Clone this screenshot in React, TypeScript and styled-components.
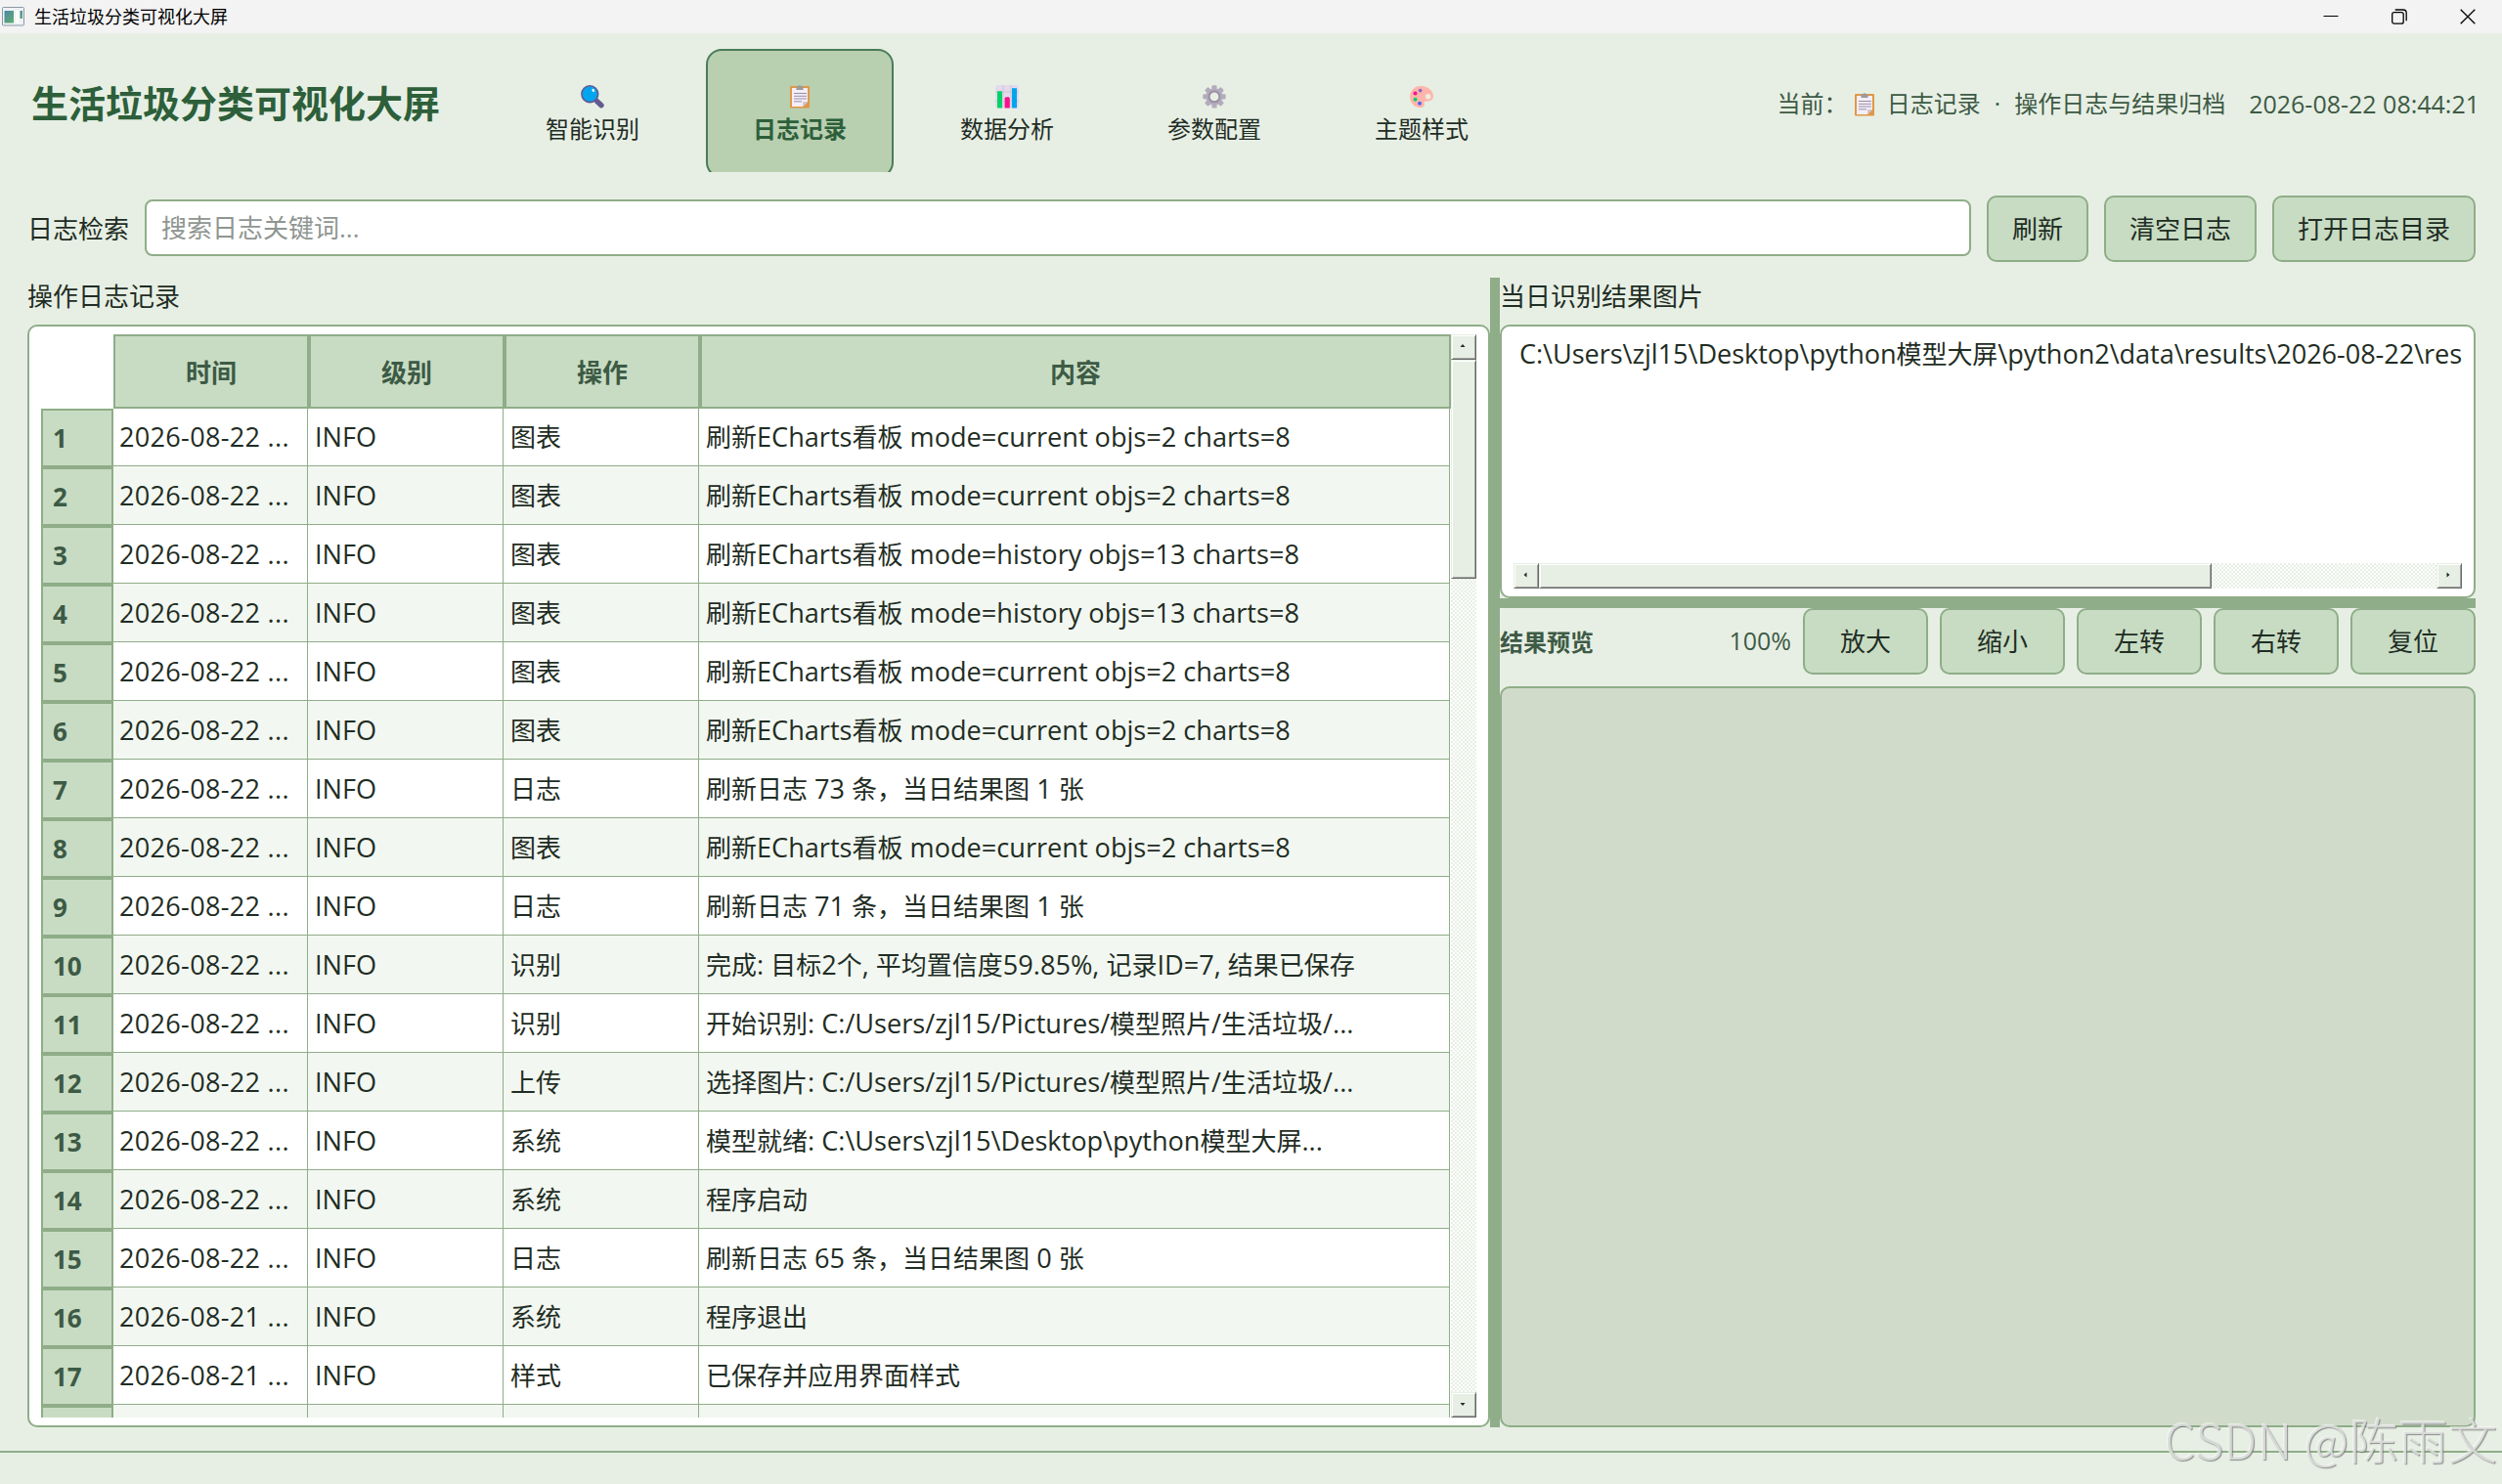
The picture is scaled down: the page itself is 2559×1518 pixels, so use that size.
import React from "react";
import styled, { createGlobalStyle, css } from "styled-components";

const c = {
  page: "#e7efe4",
  line: "#8fad88",
  button: "#c8dcc3",
  active: "#b8cfb0",
  activeLine: "#4a7c59",
  brand: "#2d5f3a",
  muted: "#3d5a45",
  text: "#1f2d24",
  alt: "#f2f7f1",
  preview: "#d0dbca",
};

const GlobalStyle = createGlobalStyle`
  * { box-sizing: border-box; }
  body {
    margin: 0;
    background: ${c.page};
    color: ${c.text};
    font-family: "Open Sans", "Noto Sans CJK SC", sans-serif;
    font-size: 26px;
    line-height: 1;
  }
`;

const Window = styled.div`
  position: relative;
  display: flex;
  flex-direction: column;
  width: 2559px;
  height: 1518px;
  overflow: hidden;
  background: ${c.page};
`;

const TitleBar = styled.header`
  display: flex;
  align-items: center;
  flex: none;
  height: 34px;
  padding: 0 27px 0 2px;
  background: #f3f3f3;
  color: #000;
  font-size: 18px;
`;

const WindowTitle = styled.span`
  flex: 1;
  margin-left: 9px;
  padding-bottom: 1px;
`;

const WindowControls = styled.div`
  display: flex;
  align-items: center;
  gap: 54px;
  padding-bottom: 1px;
`;

const Header = styled.div`
  display: flex;
  flex: none;
  height: 142px;
  padding: 16px 23px 0 32px;
  overflow: hidden;
`;

const Brand = styled.h1`
  display: flex;
  align-items: center;
  width: 478px;
  height: 110px;
  margin: 0;
  font-size: 38px;
  font-weight: 700;
  color: ${c.brand};
  white-space: nowrap;
`;

const Tabs = styled.nav`
  display: flex;
  gap: 20px;
  flex: 1;
`;

const Tab = styled.button<{ $active?: boolean }>`
  display: flex;
  flex-direction: column;
  align-items: center;
  gap: 9px;
  width: 192px;
  height: 132px;
  padding: 35px 0 0;
  border: 2px solid ${(p) => (p.$active ? c.activeLine : "transparent")};
  border-radius: 16px;
  background: ${(p) => (p.$active ? c.active : "transparent")};
  color: ${(p) => (p.$active ? c.brand : c.text)};
  font: inherit;
  font-size: 24px;
  font-weight: ${(p) => (p.$active ? 700 : 400)};
  line-height: 1;
`;

const Status = styled.div`
  display: flex;
  align-items: center;
  height: 112px;
  font-size: 24px;
  color: ${c.muted};
  white-space: pre;
`;

const StatusIcon = styled.span`
  display: flex;
  margin: 1px 13px 0 1px;
`;

const StatusText = styled.span`
  word-spacing: 0.8px;
`;

const Clock = styled.time`
  margin-left: 24px;
  font-size: 25px;
`;

const SearchRow = styled.div`
  display: flex;
  align-items: center;
  gap: 16px;
  flex: none;
  height: 108px;
  padding: 8px 27px 0 28px;
  & > label { white-space: nowrap; }
`;

const SearchInput = styled.input`
  flex: 1;
  height: 58px;
  margin-bottom: 2px;
  padding: 0 15px;
  border: 2px solid ${c.line};
  border-radius: 8px;
  background: #fff;
  color: ${c.text};
  font: inherit;
  outline: none;
  &::placeholder { color: #8f9691; opacity: 1; }
`;

const Button = styled.button<{ $width?: number }>`
  flex: none;
  width: ${(p) => (p.$width ? `${p.$width}px` : "auto")};
  height: 68px;
  padding: 0 24px;
  border: 2px solid ${c.line};
  border-radius: 10px;
  background: ${c.button};
  color: ${c.text};
  font: inherit;
  white-space: nowrap;
`;

const Main = styled.main`
  display: flex;
  flex: none;
  height: 1176px;
  padding: 0 27px 0 28px;
`;

const LogPane = styled.section`
  display: flex;
  flex-direction: column;
  width: 1496px;
`;

const SplitV = styled.div`
  width: 10px;
  background: ${c.line};
`;

const SplitH = styled.div`
  flex: none;
  height: 10px;
  background: ${c.line};
`;

const ResultPane = styled.section`
  display: flex;
  flex-direction: column;
  flex: 1;
  min-width: 0;
`;

const PaneTitle = styled.div`
  display: flex;
  align-items: center;
  flex: none;
  height: 48px;
  padding-bottom: 10px;
`;

const frame = css`
  border: 2px solid ${c.line};
  border-radius: 10px;
  background: #fff;
`;

const TableFrame = styled.div`
  ${frame}
  display: flex;
  flex: 1;
  min-height: 0;
  padding: 8px 12px;
`;

const RowHeads = styled.div`
  width: 74px;
  padding-top: 76px;
  overflow: hidden;
`;

const RowHead = styled.div`
  display: flex;
  align-items: center;
  height: 60px;
  padding-left: 10px;
  border: 2px solid ${c.line};
  background: ${c.button};
  color: ${c.muted};
  font-weight: 700;
`;

const TableArea = styled.div`
  width: 1368px;
  overflow: hidden;
`;

const columns = css`
  display: grid;
  grid-template-columns: 200px 200px 200px 768px;
`;

const ColumnHeads = styled.div`
  ${columns}
  position: relative;
  z-index: 1;
  height: 76px;
`;

const ColumnHead = styled.div`
  display: flex;
  align-items: center;
  justify-content: center;
  padding-top: 1px;
  border: 2px solid ${c.line};
  background: ${c.button};
  color: ${c.muted};
  font-weight: 700;
`;

const Rows = styled.div`
  margin: -1px 0 0 -1px;
`;

const Row = styled.div<{ $alt: boolean }>`
  ${columns}
  width: 1368px;
  height: 60px;
  background: ${(p) => (p.$alt ? c.alt : "#fff")};
`;

const Cell = styled.div<{ $spacing?: number }>`
  display: flex;
  align-items: center;
  padding-left: 7px;
  border-right: 1px solid ${c.line};
  border-bottom: 1px solid ${c.line};
  letter-spacing: ${(p) => p.$spacing ?? 0}px;
  white-space: pre;
  overflow: hidden;
`;

const Latin = styled.span`
  font-size: 1.043em;
`;

const ScrollBar = styled.div<{ $horizontal?: boolean }>`
  display: flex;
  flex-direction: ${(p) => (p.$horizontal ? "row" : "column")};
  flex: none;
  ${(p) => (p.$horizontal ? "height" : "width")}: 26px;
  background: repeating-conic-gradient(#fff 0 25%, ${c.page} 0 50%) 0 0 / 4px 4px;
`;

const Bevel = styled.div<{ $length?: number }>`
  display: flex;
  align-items: center;
  justify-content: center;
  flex: none;
  flex-basis: ${(p) => p.$length ?? 26}px;
  min-width: 26px;
  min-height: 26px;
  padding: 0 2px 2px 0;
  border: 1px solid;
  border-color: ${c.page} #696969 #696969 ${c.page};
  box-shadow: inset 1px 1px 0 #fff, inset -1px -1px 0 #a0a0a0;
  background: ${c.page};
`;

const Spacer = styled.div`
  flex: 1;
`;

const FileList = styled.div`
  ${frame}
  display: flex;
  flex-direction: column;
  flex: none;
  height: 280px;
  padding: 8px 12px;
`;

const FileItem = styled.div`
  flex: 1;
  padding: 5px 0 0 6px;
  white-space: nowrap;
  letter-spacing: -0.06px;
  line-height: 30px;
`;

const PreviewBar = styled.div`
  display: flex;
  align-items: center;
  flex: none;
  gap: 12px;
  height: 68px;
  margin-bottom: 12px;
  color: ${c.muted};
  font-size: 24px;
  & > button { font-size: 26px; }
`;

const PreviewTitle = styled.strong`
  flex: 1;
  padding-top: 1px;
`;

const Preview = styled.div`
  ${frame}
  flex: 1;
  background: ${c.preview};
`;

const StatusBar = styled.footer`
  flex: 1;
  margin-top: 24px;
  border-top: 2px solid ${c.line};
`;

const Watermark = styled.div`
  position: absolute;
  right: 4px;
  bottom: 22px;
  font-family: "Noto Sans CJK SC", sans-serif;
  font-size: 50px;
  font-weight: 300;
  letter-spacing: 0.7px;
  white-space: nowrap;
  color: rgba(222, 224, 222, 0.88);
  text-shadow: 1px 1px 1px rgba(110, 110, 110, 0.75), -1px -1px 0 rgba(255, 255, 255, 0.5);
`;

const SearchIcon = () => (
  <svg width="24" height="24" viewBox="0 0 24 24">
    <path d="M16.5 16.5l4.5 4.2" stroke="#635994" strokeWidth="5.4" strokeLinecap="round" />
    <circle cx="9.3" cy="9.2" r="8.4" fill="#00a6ed" stroke="#635994" strokeWidth="1.6" />
    <ellipse cx="12.8" cy="5.4" rx="1.3" ry="1.7" fill="#e8f6ff" transform="rotate(-35 12.8 5.4)" />
  </svg>
);

const ClipboardIcon = () => (
  <svg width="20" height="24" viewBox="0 0 20 24">
    <rect x="0" y="1" width="20" height="22.4" rx="1" fill="#e19747" />
    <path d="M2 3h16v14l-5 5H2z" fill="#f3eef8" />
    <path d="M18 17l-5 5v-4a1 1 0 0 1 1-1z" fill="#cdc4d6" />
    <path d="M6.5 1.5h1.7a2 2 0 0 1 3.6 0h1.7V5h-7z" fill="#9b9b9b" />
    <path d="M4 8.5h13M4 11.3h13M4 14h13M4 16.8h8" stroke="#998ea4" strokeWidth="1" />
  </svg>
);

const ChartIcon = () => (
  <svg width="24" height="24" viewBox="0 0 24 24">
    <rect width="24" height="23.5" rx="2.5" fill="#e4daec" />
    <path d="M8 0v23M16 0v23M0 7h24M0 16.6h24" stroke="#cdc4d6" strokeWidth="1" />
    <rect x="2" y="6.3" width="5" height="17.2" fill="#00d26a" />
    <path d="M9.6 13.5l1-1.3h3.2l1 1.3v10H9.6z" fill="#f8118c" />
    <rect x="17" y="3.2" width="5" height="20.3" fill="#00a6ed" />
  </svg>
);

const GearIcon = () => (
  <svg width="24" height="24" viewBox="0 0 24 24">
    <g fill="#b4acbc">
      {[0, 45, 90, 135].map((a) => (
        <rect key={a} x="9.4" y="0.2" width="5.2" height="23.4" rx="1.4" transform={`rotate(${a} 12 11.9)`} />
      ))}
      <circle cx="12" cy="11.9" r="8.6" />
    </g>
    <circle cx="12" cy="11.9" r="5.4" fill={c.page} stroke="#998ea4" strokeWidth="2" />
  </svg>
);

const PaletteIcon = () => (
  <svg width="24" height="24" viewBox="0 0 24 24">
    <path
      fillRule="evenodd"
      d="M11 1C4.800 1 0 5.900 0 12s4.700 11 10.500 11c3.500 0 4.900-1.700 4.200-3.700-.5-1.500.5-2.800 2.500-2.800 4 0 6.800-1.700 6.800-5C24 5.200 18 1 11 1zM18.700 9a2.700 2.700 0 1 1 0 5.400 2.700 2.700 0 0 1 0-5.400z"
      fill="#ffb5aa"
    />
    <circle cx="10.600" cy="5.600" r="1.900" fill="#8c67c9" />
    <circle cx="5.500" cy="8.600" r="2" fill="#f8118c" />
    <circle cx="5.500" cy="14.700" r="2" fill="#00d26a" />
    <circle cx="10" cy="18.700" r="2" fill="#4a66f5" />
  </svg>
);

const AppIcon = () => (
  <svg width="24" height="20" viewBox="0 0 24 20">
    <defs>
      <linearGradient id="appFill" x1="0" y1="0" x2="1" y2="1">
        <stop offset="0" stopColor="#4d86a8" />
        <stop offset="1" stopColor="#5fae6c" />
      </linearGradient>
    </defs>
    <rect x="0.5" y="0.5" width="22" height="18.500" rx="1" fill="#eef2f5" stroke="#8c98a4" />
    <rect x="2.500" y="4" width="9.500" height="12.500" fill="url(#appFill)" />
    <rect x="14" y="4" width="3.500" height="12.500" fill="#fbfbfb" />
    <rect x="18.500" y="4" width="2.500" height="8" fill="url(#appFill)" />
  </svg>
);

const Arrow = ({ d }: { d: string }) => (
  <svg width="6" height="6" viewBox="0 0 6 6">
    <path d={d} fill={c.text} />
  </svg>
);

/* Sets Latin runs slightly larger than the Chinese text around them. */
const Mixed = ({ text }: { text: string }) => (
  <span>
    {text
      .split(/([\x20-\x7e]+)/)
      .filter(Boolean)
      .map((run, i) => (/^[\x20-\x7e]/.test(run) ? <Latin key={i}>{run}</Latin> : run))}
  </span>
);

const tabs = [
  { label: "智能识别", icon: <SearchIcon /> },
  { label: "日志记录", icon: <ClipboardIcon />, active: true },
  { label: "数据分析", icon: <ChartIcon /> },
  { label: "参数配置", icon: <GearIcon /> },
  { label: "主题样式", icon: <PaletteIcon /> },
];

const D22 = "2026-08-22 ...";
const D21 = "2026-08-21 ...";
const CURRENT = "刷新ECharts看板 mode=current objs=2 charts=8";
const HISTORY = "刷新ECharts看板 mode=history objs=13 charts=8";

const logs: [string, string, string][] = [
  [D22, "图表", CURRENT],
  [D22, "图表", CURRENT],
  [D22, "图表", HISTORY],
  [D22, "图表", HISTORY],
  [D22, "图表", CURRENT],
  [D22, "图表", CURRENT],
  [D22, "日志", "刷新日志 73 条，当日结果图 1 张"],
  [D22, "图表", CURRENT],
  [D22, "日志", "刷新日志 71 条，当日结果图 1 张"],
  [D22, "识别", "完成: 目标2个, 平均置信度59.85%, 记录ID=7, 结果已保存"],
  [D22, "识别", "开始识别: C:/Users/zjl15/Pictures/模型照片/生活垃圾/..."],
  [D22, "上传", "选择图片: C:/Users/zjl15/Pictures/模型照片/生活垃圾/..."],
  [D22, "系统", "模型就绪: C:\\Users\\zjl15\\Desktop\\python模型大屏..."],
  [D22, "系统", "程序启动"],
  [D22, "日志", "刷新日志 65 条，当日结果图 0 张"],
  [D21, "系统", "程序退出"],
  [D21, "样式", "已保存并应用界面样式"],
];

export default function App() {
  return (
    <Window>
      <GlobalStyle />
      <TitleBar>
        <AppIcon />
        <WindowTitle>生活垃圾分类可视化大屏</WindowTitle>
        <WindowControls>
          <svg width="16" height="16" viewBox="0 0 16 16">
            <path d="M0.500 7.500h15" stroke="#000" />
          </svg>
          <svg width="16" height="16" viewBox="0 0 16 16" fill="none" stroke="#000" strokeWidth="1.300">
            <rect x="0.700" y="3.700" width="11.500" height="11.500" rx="2" />
            <path d="M3.700 1h8.300a3.200 3.200 0 0 1 3.200 3.200v8" />
          </svg>
          <svg width="16" height="16" viewBox="0 0 16 16">
            <path d="M0.700 0.700l14.600 14.600M15.300 0.700L0.700 15.300" stroke="#000" strokeWidth="1.300" />
          </svg>
        </WindowControls>
      </TitleBar>

      <Header>
        <Brand>生活垃圾分类可视化大屏</Brand>
        <Tabs>
          {tabs.map((t) => (
            <Tab key={t.label} $active={t.active}>
              {t.icon}
              <span>{t.label}</span>
            </Tab>
          ))}
        </Tabs>
        <Status>
          <span>当前： </span>
          <StatusIcon>
            <ClipboardIcon />
          </StatusIcon>
          <StatusText>{"日志记录  ·  操作日志与结果归档"}</StatusText>
          <Clock>2026-08-22 08:44:21</Clock>
        </Status>
      </Header>

      <SearchRow>
        <label>日志检索</label>
        <SearchInput placeholder="搜索日志关键词..." />
        <Button>刷新</Button>
        <Button>清空日志</Button>
        <Button>打开日志目录</Button>
      </SearchRow>

      <Main>
        <LogPane>
          <PaneTitle>操作日志记录</PaneTitle>
          <TableFrame>
            <RowHeads>
              {logs.map((_, i) => (
                <RowHead key={i}>{i + 1}</RowHead>
              ))}
              <RowHead />
            </RowHeads>
            <TableArea>
              <ColumnHeads>
                {["时间", "级别", "操作", "内容"].map((h) => (
                  <ColumnHead key={h}>{h}</ColumnHead>
                ))}
              </ColumnHeads>
              <Rows>
                {logs.map(([time, action, message], i) => (
                  <Row key={i} $alt={i % 2 === 1}>
                    <Cell $spacing={0.28}>
                      <Mixed text={time} />
                    </Cell>
                    <Cell>
                      <Mixed text="INFO" />
                    </Cell>
                    <Cell>{action}</Cell>
                    <Cell>
                      <Mixed text={message} />
                    </Cell>
                  </Row>
                ))}
                <Row $alt>
                  <Cell />
                  <Cell />
                  <Cell />
                  <Cell />
                </Row>
              </Rows>
            </TableArea>
            <ScrollBar>
              <Bevel>
                <Arrow d="M3 1L5.500 4H.5z" />
              </Bevel>
              <Bevel $length={224} />
              <Spacer />
              <Bevel>
                <Arrow d="M3 5L.5 2h5z" />
              </Bevel>
            </ScrollBar>
          </TableFrame>
        </LogPane>

        <SplitV />

        <ResultPane>
          <PaneTitle>当日识别结果图片</PaneTitle>
          <FileList>
            <FileItem>
              <Mixed text={"C:\\Users\\zjl15\\Desktop\\python模型大屏\\python2\\data\\results\\2026-08-22\\res"} />
            </FileItem>
            <ScrollBar $horizontal>
              <Bevel>
                <Arrow d="M1.500 3L4.500 .5v5z" />
              </Bevel>
              <Bevel $length={688} />
              <Spacer />
              <Bevel>
                <Arrow d="M4.500 3L1.500 .5v5z" />
              </Bevel>
            </ScrollBar>
          </FileList>
          <SplitH />
          <PreviewBar>
            <PreviewTitle>结果预览</PreviewTitle>
            <Latin>100%</Latin>
            {["放大", "缩小", "左转", "右转", "复位"].map((b) => (
              <Button key={b} $width={128}>
                {b}
              </Button>
            ))}
          </PreviewBar>
          <Preview />
        </ResultPane>
      </Main>

      <StatusBar />
      <Watermark>CSDN @陈雨文</Watermark>
    </Window>
  );
}
